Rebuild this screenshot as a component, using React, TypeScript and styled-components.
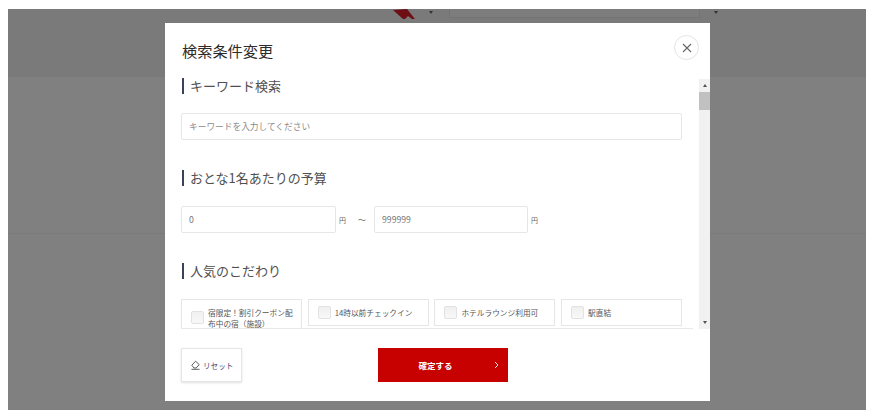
import React from "react";
import styled, { createGlobalStyle } from "styled-components";

const GlobalStyle = createGlobalStyle`
  html, body {
    margin: 0;
    background: #ffffff;
  }
  body {
    padding: 9px 8px 8px;
    font-family: "Noto Sans CJK JP", "Noto Sans", sans-serif;
    color: #333333;
  }
`;

const Stage = styled.div`
  position: relative;
  width: 858px;
  height: 401px;
  background: #808080;
  overflow: hidden;
`;

const PageHeader = styled.header`
  height: 68px;
  background: #7a7a7a;
  display: flex;
  align-items: flex-start;
  padding-left: 385px;
  box-sizing: border-box;
`;

const Logo = styled.svg`
  width: 23px;
  height: 10px;
  display: block;
`;

const Caret = styled.span<{ $gap: number }>`
  width: 0;
  height: 0;
  margin-top: 2px;
  margin-left: ${(p) => p.$gap}px;
  border-left: 2.5px solid transparent;
  border-right: 2.5px solid transparent;
  border-top: 3px solid #333333;
`;

const HeaderSelect = styled.div`
  width: 251px;
  height: 9px;
  margin: 0 12px 0 16px;
  border: 1px solid #747474;
  border-top: 0;
  box-sizing: border-box;
  background: #7d7d7d;
`;

const PageSection = styled.div`
  height: 156px;
  border-bottom: 1px solid #7a7a7a;
`;

const Modal = styled.div`
  position: absolute;
  left: 157px;
  top: 14px;
  width: 545px;
  height: 378px;
  background: #ffffff;
  display: flex;
  flex-direction: column;
`;

const ModalHead = styled.div`
  height: 51px;
  flex: none;
  padding: 0 11px 0 17px;
  display: flex;
  justify-content: space-between;
  align-items: flex-start;
  box-sizing: border-box;
`;

const Title = styled.h1`
  margin: 13px 0 0;
  font-size: 15.2px;
  line-height: 28px;
  font-weight: 400;
  color: #2b2b2b;
`;

const CloseButton = styled.button`
  width: 25px;
  height: 25px;
  margin-top: 12px;
  padding: 0;
  border: 1px solid #e4e4e4;
  border-radius: 50%;
  background: #ffffff;
  color: #666666;
  display: flex;
  align-items: center;
  justify-content: center;
`;

const ModalBody = styled.div`
  display: flex;
  height: 255px;
  flex: none;
  padding-left: 16px;
  gap: 6px;
`;

const ScrollArea = styled.div`
  width: 512px;
  height: 255px;
  padding-top: 4px;
  box-sizing: border-box;
  overflow: hidden;
  border-bottom: 1px solid #e8e8e8;
  display: flex;
  flex-direction: column;
  gap: 30px;
`;

const Section = styled.section`
  display: flex;
  flex-direction: column;
  gap: 20px;
  flex: none;

  &:first-child {
    gap: 19px;
  }
`;

const Heading = styled.h2`
  margin: 0 0 0 1px;
  height: 16px;
  padding-left: 6px;
  border-left: 2px solid #3c4058;
  font-size: 13px;
  line-height: 15px;
  font-weight: 400;
  color: #505050;
`;

const TextInput = styled.input<{ $width: number }>`
  width: ${(p) => p.$width}px;
  height: 27px;
  box-sizing: border-box;
  padding: 0 7px;
  border: 1px solid #e6e6e6;
  border-radius: 2px;
  background: #ffffff;
  font-family: inherit;
  font-size: 8.7px;
  color: #777777;
  outline: none;

  &::placeholder {
    color: #8a8a8a;
    opacity: 1;
  }
`;

const BudgetRow = styled.div`
  display: flex;
  align-items: center;
  font-size: 7px;
  color: #666666;
`;

const Yen = styled.span`
  margin-left: 3px;
`;

const Tilde = styled.span`
  margin: 0 8px 0 12px;
  font-size: 8px;
`;

const Options = styled.div`
  display: grid;
  grid-template-columns: repeat(4, 121px);
  gap: 5.7px;
  align-items: start;
  flex: none;
  margin-top: -10px;
`;

const Option = styled.label<{ $tall?: boolean }>`
  height: ${(p) => (p.$tall ? 37 : 27)}px;
  box-sizing: border-box;
  padding: 0 6px 0 9px;
  border: 1px solid #e6e6e6;
  display: flex;
  align-items: center;
  gap: 4px;
  font-size: 7.7px;
  line-height: 11px;
  color: #555555;
`;

const CheckBox = styled.span`
  width: 13px;
  height: 13px;
  flex: none;
  box-sizing: border-box;
  border: 1px solid #e2e2e2;
  border-radius: 2px;
  background: linear-gradient(#f0f0f0, #f8f8f8);
`;

const ScrollBar = styled.div`
  width: 11px;
  height: 250px;
  margin-top: 5px;
  background: #f1f1f1;
  display: flex;
  flex-direction: column;
  align-items: center;
`;

const ArrowSlot = styled.div`
  height: 13px;
  flex: none;
  display: flex;
  align-items: center;
`;

const Arrow = styled.span<{ $down?: boolean }>`
  width: 0;
  height: 0;
  border-left: 2.5px solid transparent;
  border-right: 2.5px solid transparent;
  ${(p) =>
    p.$down
      ? "border-top: 3px solid #505050;"
      : "border-bottom: 3px solid #505050;"}
`;

const Thumb = styled.div`
  width: 100%;
  height: 18px;
  flex: none;
  background: #c1c1c1;
`;

const Track = styled.div`
  flex: 1;
`;

const Footer = styled.div`
  padding: 19px 0 0 16px;
  display: flex;
  gap: 136px;
`;

const ResetButton = styled.button`
  width: 61px;
  height: 34px;
  padding: 0 0 0 9px;
  box-sizing: border-box;
  border: 1px solid #e6e6e6;
  box-shadow: 0 1px 2px rgba(0, 0, 0, 0.12);
  background: #ffffff;
  color: #4a4a70;
  font-family: inherit;
  font-size: 7.6px;
  display: flex;
  align-items: center;
  gap: 3px;
`;

const SubmitButton = styled.button`
  position: relative;
  width: 130px;
  height: 34px;
  padding: 0 15px 0 0;
  border: 0;
  background: #c70000;
  color: #ffffff;
  font-family: inherit;
  font-size: 8.5px;
  font-weight: 700;
`;

const Chevron = styled.svg`
  position: absolute;
  right: 9px;
  top: 13px;
  width: 5px;
  height: 8px;
`;

const options = ["14時以前チェックイン", "ホテルラウンジ利用可", "駅直結"];

const App = () => {
  return (
    <Stage>
      <GlobalStyle />
      <PageHeader>
        <Logo viewBox="0 0 23 10">
          <path d="M0 1L14 0l8 10h-3l-4-3-3 3h-2z" fill="#6d0f14" />
        </Logo>
        <Caret $gap={13} />
        <HeaderSelect />
        <Caret $gap={2} />
      </PageHeader>
      <PageSection />

      <Modal>
        <ModalHead>
          <Title>検索条件変更</Title>
          <CloseButton aria-label="閉じる">
            <svg width="10" height="10" viewBox="0 0 10 10">
              <path d="M1 1l8 8M9 1l-8 8" stroke="currentColor" strokeWidth="1.1" fill="none" />
            </svg>
          </CloseButton>
        </ModalHead>

        <ModalBody>
          <ScrollArea>
            <Section>
              <Heading>キーワード検索</Heading>
              <TextInput $width={501} placeholder="キーワードを入力してください" />
            </Section>
            <Section>
              <Heading>おとな1名あたりの予算</Heading>
              <BudgetRow>
                <TextInput $width={155} defaultValue="0" />
                <Yen>円</Yen>
                <Tilde>～</Tilde>
                <TextInput $width={154} defaultValue="999999" />
                <Yen>円</Yen>
              </BudgetRow>
            </Section>
            <Section>
              <Heading>人気のこだわり</Heading>
            </Section>
            <Options>
              <Option $tall>
                <CheckBox />
                <span>宿限定！割引クーポン配布中の宿（施設）</span>
              </Option>
              {options.map((label) => (
                <Option key={label}>
                  <CheckBox />
                  <span>{label}</span>
                </Option>
              ))}
            </Options>
          </ScrollArea>
          <ScrollBar>
            <ArrowSlot>
              <Arrow />
            </ArrowSlot>
            <Thumb />
            <Track />
            <ArrowSlot>
              <Arrow $down />
            </ArrowSlot>
          </ScrollBar>
        </ModalBody>

        <Footer>
          <ResetButton>
            <svg width="9" height="10" viewBox="0 0 9 10" fill="none" stroke="#4a4a4a" strokeWidth="0.9">
              <path d="M0.8 5.2L4.6 1.2l3.6 3.4-3 3.400H3z" />
              <path d="M0.5 9.300h8" />
            </svg>
            リセット
          </ResetButton>
          <SubmitButton>
            確定する
            <Chevron viewBox="0 0 5 8">
              <path d="M1 1l3 3-3 3" stroke="#f6dcdc" strokeWidth="1" fill="none" />
            </Chevron>
          </SubmitButton>
        </Footer>
      </Modal>
    </Stage>
  );
};

export default App;
